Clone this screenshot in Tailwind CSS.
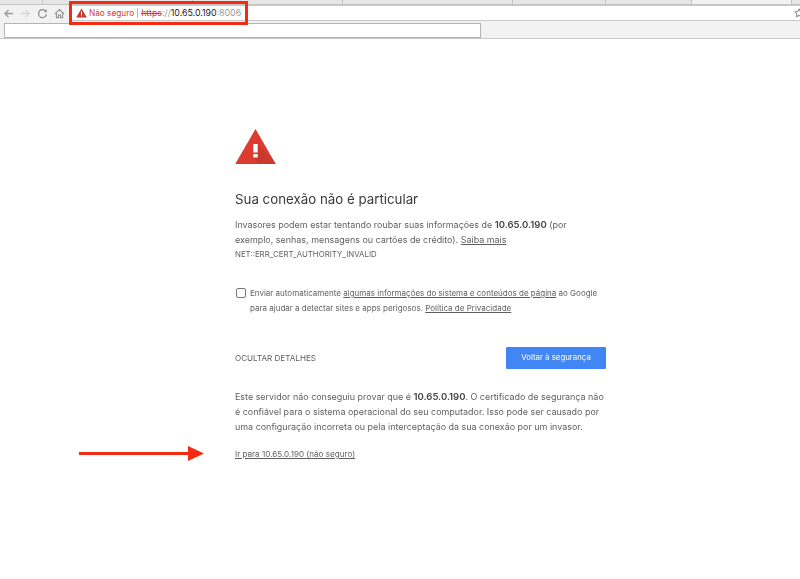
<!DOCTYPE html>
<html lang="pt">
  <head>
    <meta charset="UTF-8" />
    <title>Erro de privacidade</title>
    <script src="https://cdn.jsdelivr.net/npm/@tailwindcss/browser@4"></script>
  </head>
  <body class="relative w-[800px] h-[579px] overflow-hidden bg-white blur-[0.35px] font-['Inter',sans-serif] text-[#5f5f5f]">
    <!-- Browser chrome -->
    <div class="h-[5px] flex bg-[#e6e6e6] border-b border-[#c4c4c4]">
      <div class="w-[43px] border-r border-[#c4c4c4]"></div>
      <div class="w-[150px] border-r border-[#c4c4c4]"></div>
      <div class="w-[150px] border-r border-[#c4c4c4]"></div>
      <div class="w-[170px] border-r border-[#c4c4c4]"></div>
      <div class="w-[93px] border-r border-[#c4c4c4]"></div>
      <div class="w-[86px] border-r border-[#c4c4c4]"></div>
      <div class="w-[100px] bg-[#f2f2f2] border-r border-[#c4c4c4]"></div>
    </div>
    <div class="h-[16px] flex items-center bg-[#f2f2f2]">
      <div class="w-[70px] flex items-center gap-[6px] pl-[3px] shrink-0">
        <svg class="w-[11px] h-[11px]" viewBox="0 0 12 12" fill="none" stroke="#9a9a9a" stroke-width="1.4"><path d="M11 6H2M6 2 2 6l4 4" /></svg>
        <svg class="w-[11px] h-[11px]" viewBox="0 0 12 12" fill="none" stroke="#d6d6d6" stroke-width="1.4"><path d="M1 6h9M6 2l4 4-4 4" /></svg>
        <svg class="w-[11px] h-[11px]" viewBox="0 0 12 12" fill="none" stroke="#8a8a8a" stroke-width="1.3"><path d="M10 4.2A4.4 4.4 0 1 0 10.4 7" /><path d="M10.6 1.4v3.2H7.4" fill="#8a8a8a" stroke="none" /></svg>
        <svg class="w-[11px] h-[11px]" viewBox="0 0 12 12" fill="none" stroke="#8a8a8a" stroke-width="1.1"><path d="M1 6.4 6 1.6l5 4.8M2.6 5.4V10.6h2.4V7.6h2v3h2.4V5.4" /></svg>
      </div>
      <div class="flex-1 h-full bg-white border-y border-[#c8c8c8] flex items-center justify-between">
        <div class="flex items-center pl-[6px] text-[8.8px] leading-none whitespace-nowrap">
          <svg class="w-[11px] h-[10px] mr-[2px]" viewBox="0 0 12 11"><path d="M6 .5 11.8 10.5H.2Z" fill="#c8352a" /><path d="M5.4 3.8h1.2v3.6H5.4zM5.4 8h1.2v1.2H5.4z" fill="#fff" /></svg>
          <span class="text-[#d33a2c] text-[8.25px]">Não seguro</span>
          <span class="w-px h-[10px] bg-[#bbb] mx-[3px]"></span>
          <span class="text-[#d33a2c] line-through">https</span><span class="text-[#999]">://</span><span class="text-[#222]">10.65.0.190</span><span class="text-[#999]">:8006</span>
        </div>
        <svg class="w-[10px] h-[10px] mr-[-4px]" viewBox="0 0 12 12" fill="none" stroke="#666" stroke-width="1"><path d="m6 1 1.5 3.3 3.6.4-2.7 2.4.8 3.6L6 8.9l-3.2 1.8.8-3.6L.9 4.7l3.6-.4Z" /></svg>
      </div>
    </div>
    <div class="h-[18px] bg-[#f2f2f2] border-b border-[#c8c8c8] pl-[4px] pt-[2px]">
      <div class="w-[477px] h-[15px] bg-white border border-[#b4b4b4]"></div>
    </div>

    <!-- Interstitial -->
    <main class="w-[371px] ml-[235px] pt-[90px]">
      <svg class="w-[41px] h-[36px] block" viewBox="0 0 41 36">
        <path d="M20.5 0 40.8 35H.2Z" fill="#dc3c30" />
        <path d="M23 15 40.8 35H24L18.5 28.5Z" fill="#cb382c" />
        <path d="M18.3 15h4.4v8.5h-4.4zM18.3 25h4.4v3.5h-4.4z" fill="#fff" />
      </svg>
      <h1 class="mt-[24px] text-[13.3px] leading-[20px] text-[#3a3a3a]">Sua conexão não é particular</h1>
      <p class="mt-[8px] text-[8.95px] leading-[15px]">
        Invasores podem estar tentando roubar suas informações de <b class="text-[9.5px] font-semibold text-[#444]">10.65.0.190</b> (por exemplo, senhas, mensagens ou cartões de crédito). <span class="underline">Saiba mais</span>
      </p>
      <p class="mt-[1px] text-[7.85px] leading-[13px]">NET::ERR_CERT_AUTHORITY_INVALID</p>
      <div class="mt-[25px] flex">
        <span class="w-[10px] h-[10px] mt-[2px] ml-[1px] mr-[4px] shrink-0 border border-[#777] rounded-[2px]"></span>
        <p class="text-[8px] leading-[15px]">
          Enviar automaticamente <span class="underline">algumas informações do sistema e conteúdos de página</span> ao Google para ajudar a detectar sites e apps perigosos. <span class="underline">Política de Privacidade</span>
        </p>
      </div>
      <div class="mt-[31px] flex items-center justify-between">
        <span class="text-[8.1px]">OCULTAR DETALHES</span>
        <button class="w-[100px] h-[22px] bg-[#4285f4] rounded-[1px] text-white text-[7.85px]">Voltar à segurança</button>
      </div>
      <p class="mt-[20px] text-[8.95px] leading-[15px]">
        Este servidor não conseguiu provar que é <b class="text-[9.5px] font-semibold text-[#444]">10.65.0.190</b>. O certificado de segurança não é confiável para o sistema operacional do seu computador. Isso pode ser causado por uma configuração incorreta ou pela interceptação da sua conexão por um invasor.
      </p>
      <p class="mt-[14px] text-[8.1px] leading-[12px] underline">Ir para 10.65.0.190 (não seguro)</p>
    </main>

    <!-- Annotations -->
    <div class="absolute left-[69px] top-[1px] w-[179px] h-[24px] border-[3px] border-[#f52a13]"></div>
    <svg class="absolute left-[79px] top-[444px]" width="126" height="18" viewBox="0 0 126 18">
      <path d="M0 8h110v3H0z" fill="#f52a13" /><path d="M109 2l16 7.5-16 7.5z" fill="#f52a13" />
    </svg>
  </body>
</html>
